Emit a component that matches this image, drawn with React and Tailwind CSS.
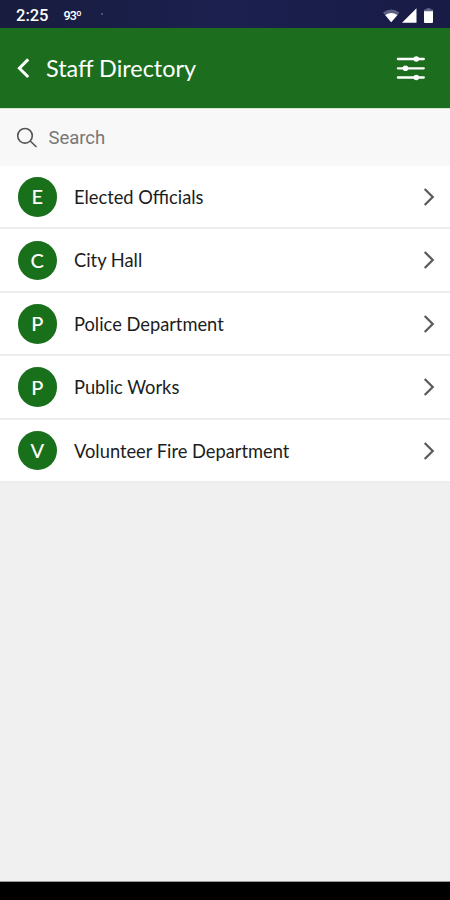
const departments = [
  'Elected Officials',
  'City Hall',
  'Police Department',
  'Public Works',
  'Volunteer Fire Department',
];

function StatusBar() {
  return (
    <div className="h-7 shrink-0 flex items-center bg-linear-to-r from-[#181c3e] via-[#1b204f] to-[#181b45] pl-4 pr-[15px] pt-[3px] text-white font-['Roboto',sans-serif]">
      <span className="mt-0.5 text-[16.5px] leading-none font-medium">2:25</span>
      <span className="mt-0.5 ml-[15px] text-[12.5px] leading-none font-medium tracking-[-0.9px]">93º</span>
      <span className="ml-5 mb-1 size-0.5 rounded-full bg-[#626789]" />
      <svg className="ml-auto" width="53" height="18" viewBox="0 0 53 18">
        <path d="M1 5.6 Q9 -.4 17.5 5.6 L9.2 15.3Z" fill="#5c6084" />
        <path d="M3.2 8 Q9.2 3.9 15.5 8 L9.2 15.3Z" fill="#fff" />
        <path d="M20 15.7 L34.5 1.2 V15.7Z" fill="#fff" />
        <path d="M44.5 1.2h4v1.3h2.5v3h-9v-3h2.5Z" fill="#666a8a" />
        <path d="M42 4.2h9v10.7q0 1-1 1h-7q-1 0-1-1Z" fill="#fff" />
      </svg>
    </div>
  );
}

function Header() {
  return (
    <header className="h-20 shrink-0 flex items-center bg-[#1c6e1e] pl-4 pr-6 text-white">
      <svg width="14" height="22" viewBox="0 0 14 22" fill="none" stroke="currentColor" strokeWidth="3">
        <path d="M12.2 2.4 3.4 11.2 12.2 20" />
      </svg>
      <h1 className="ml-4 text-[23.4px] leading-8">Staff Directory</h1>
      <svg className="ml-auto" width="30" height="26" viewBox="0 0 30 26" fill="currentColor">
        <path d="M1.9 4h25.9M1.9 13.3h25.9M1.9 22.5h25.9" stroke="currentColor" strokeWidth="2.3" strokeLinecap="round" />
        <circle cx="20.3" cy="4" r="2.8" />
        <circle cx="9.5" cy="13.3" r="2.8" />
        <circle cx="20.3" cy="22.5" r="2.8" />
      </svg>
    </header>
  );
}

function SearchBar() {
  return (
    <div className="h-[58px] shrink-0 flex items-center bg-[#f8f8f8] border-t border-[#d5e3d5] pl-4">
      <svg width="22" height="22" viewBox="0 0 22 22" fill="none" stroke="#555" strokeWidth="1.6">
        <circle cx="9" cy="8.8" r="7.3" />
        <path d="m14.2 14 6.3 6" />
      </svg>
      <span className="mt-px ml-[10.5px] text-[18.5px] leading-6 text-[#777] tracking-[-0.05px] font-['Roboto',sans-serif]">
        Search
      </span>
    </div>
  );
}

function DepartmentRow({ name }) {
  return (
    <li className="h-[63.4px] flex items-center bg-white border-b-2 border-[#ededed] pl-[17.5px] pr-[15.5px] pt-[0.6px]">
      <span className="size-[39.5px] shrink-0 flex items-center justify-center rounded-full bg-[#19701b] pb-px text-[20px] font-medium text-white">
        {name[0]}
      </span>
      <span className="ml-[17px] text-[18.3px] leading-6 text-[#1c1c1c]">{name}</span>
      <svg className="ml-auto" width="13" height="20" viewBox="0 0 13 20" fill="none" stroke="#5c5c5c" strokeWidth="2.3">
        <path d="M2.7 2 10.7 10 2.7 18" />
      </svg>
    </li>
  );
}

export default function App() {
  return (
    <div className="w-[450px] h-[900px] flex flex-col overflow-hidden bg-[#f0f0f0] font-['Lato',sans-serif]">
      <StatusBar />
      <Header />
      <SearchBar />
      <ul>
        {departments.map((name) => (
          <DepartmentRow key={name} name={name} />
        ))}
      </ul>
      <div className="mt-auto h-[19px] shrink-0 bg-black border-t border-[#999]" />
    </div>
  );
}
